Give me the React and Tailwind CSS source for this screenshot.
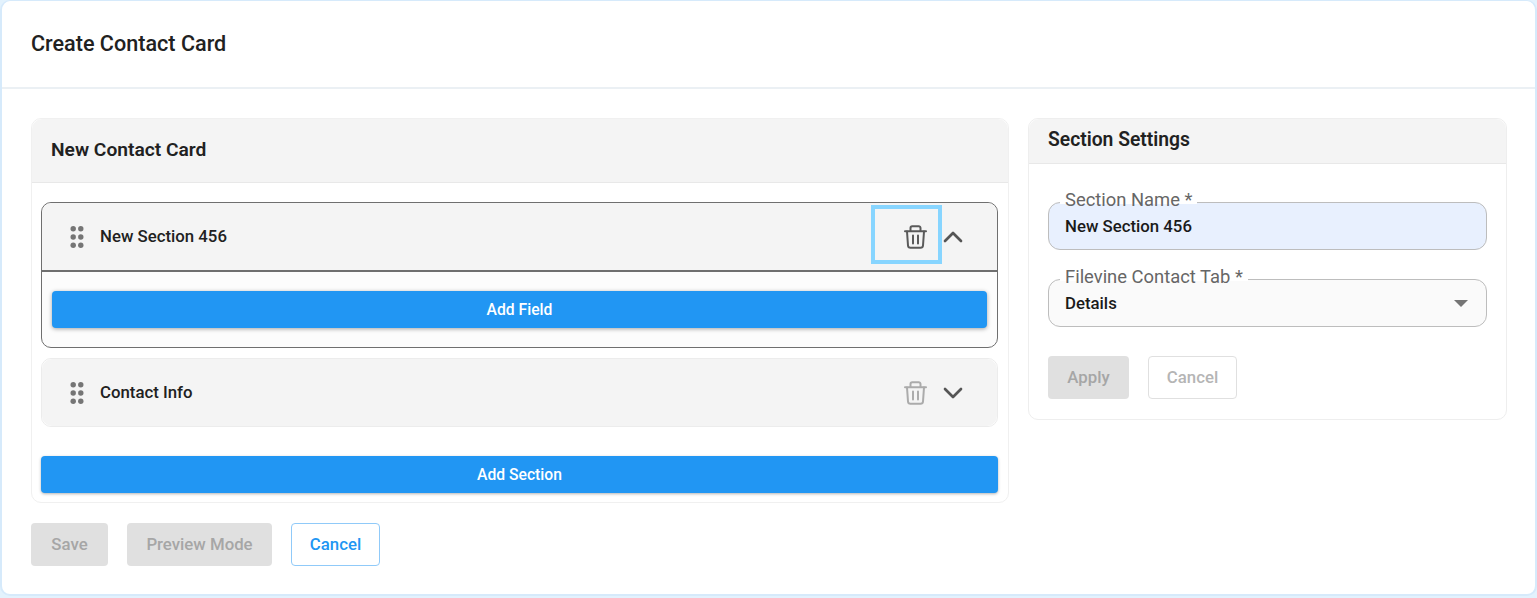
import React from "react";
import { ChevronUp, ChevronDown } from "lucide-react";

function GripDots() {
  return (
    <svg width="14" height="24" viewBox="0 0 14 24" className="shrink-0 text-[#757575]">
      {[3.7, 12, 20.3].map((y) => (
        <g key={y} fill="currentColor">
          <circle cx="3.2" cy={y} r="2.7" />
          <circle cx="10.8" cy={y} r="2.7" />
        </g>
      ))}
    </svg>
  );
}

function TrashIcon({ className }) {
  return (
    <svg
      width="25"
      height="24"
      viewBox="0 0 25 24"
      fill="none"
      stroke="currentColor"
      strokeWidth="2"
      strokeLinecap="round"
      strokeLinejoin="round"
      className={`shrink-0 ${className}`}
    >
      <path d="M2 6.2h21" />
      <path d="M7.5 6V3a1.8 1.8 0 0 1 1.8-1.8h6.4A1.8 1.8 0 0 1 17.5 3v3" />
      <path d="M4 6.5l1 14a2.5 2.5 0 0 0 2.5 2.3h10a2.5 2.5 0 0 0 2.5-2.3l1-14" />
      <path d="M10 10.5v8M15 10.5v8" />
    </svg>
  );
}

function SectionHeader({ title, open }) {
  return (
    <div
      className={`flex items-center rounded-t-[10px] bg-[#f4f4f4] pl-[28px] pr-[32px] ${
        open ? "h-[69px] border-b-2 border-[#6f6f6f]" : "h-[67px] rounded-b-[10px]"
      }`}
    >
      <GripDots />
      <span className="ml-[16px] flex-1 text-[16.8px] font-medium text-[#212121]">{title}</span>
      <div className="relative flex h-[24px] w-[24px] items-center justify-center">
        <TrashIcon className={open ? "text-[#5a5a5a]" : "text-[#ababab]"} />
        {open && (
          <div className="absolute left-[-32px] top-[-20px] h-[59px] w-[71px] border-[4px] border-[#87d5ff]" />
        )}
      </div>
      <div className="ml-[14px] flex w-[24px] items-center justify-center text-[#555555]">
        {open ? (
          <ChevronUp size={32} strokeWidth={2} className="shrink-0" />
        ) : (
          <ChevronDown size={32} strokeWidth={2} className="shrink-0" />
        )}
      </div>
    </div>
  );
}

function OutlinedField({ label, value, filled, select }) {
  return (
    <div
      className={`relative flex h-[48px] items-center rounded-[12px] border border-[#bdbdbd] px-[16px] text-[16.8px] font-medium text-[#1a1a1a] ${
        filled ? "bg-[#e8f0fe]" : "bg-[#fafafa]"
      }`}
    >
      <span className="absolute left-[11px] top-[-14px] px-[5px] text-[18.4px] leading-[22px] font-normal text-[#666666] [background:linear-gradient(to_bottom,white_68%,transparent_68%)]">
        {label}
      </span>
      <span className="flex-1 pt-[1px]">{value}</span>
      {select && (
        <svg width="14" height="7" viewBox="0 0 14 7" className="mr-[2px] text-[#757575]">
          <path d="M0 0h14L7 7z" fill="currentColor" />
        </svg>
      )}
    </div>
  );
}

export default function App() {
  return (
    <div className="h-[598px] w-full bg-[#e3f2fd] font-['Roboto','Liberation_Sans',sans-serif]">
      <div className="h-[596px] rounded-[10px] border-x-2 border-t border-b-2 border-[#d6eafb] bg-white">
        <div className="flex h-[88px] items-center border-b-2 border-[#ebf0f4] pl-[29px]">
          <h1 className="text-[21.6px] font-medium text-[#212121]">Create Contact Card</h1>
        </div>

        <div className="flex gap-[19px] pl-[29px] pr-[28px] pt-[29px]">
          {/* left column */}
          <div className="w-[978px]">
            <div className="h-[385px] rounded-[10px] border border-[#f0f0f0]">
              <div className="flex h-[64px] items-center rounded-t-[10px] border-b border-[#e8e8e8] bg-[#f4f4f4] pl-[19px] text-[19.2px] font-semibold text-[#212121]">
                New Contact Card
              </div>
              <div className="pl-[9px] pr-[10px] pt-[19px]">
                <div className="h-[146px] rounded-[10px] border border-[#6f6f6f] bg-[#fcfcfc]">
                  <SectionHeader title="New Section 456" open />
                  <div className="px-[10px] pt-[19px]">
                    <button className="h-[37px] w-full rounded-[4px] bg-[#2196f3] text-[15.7px] font-medium text-white shadow-[0_1px_4px_rgba(0,0,0,0.35)]">
                      Add Field
                    </button>
                  </div>
                </div>
                <div className="mt-[10px] h-[69px] rounded-[10px] border border-[#ececec]">
                  <SectionHeader title="Contact Info" />
                </div>
                <button className="mt-[29px] h-[37px] w-full rounded-[4px] bg-[#2196f3] text-[15.7px] font-medium text-white shadow-[0_1px_3px_rgba(0,0,0,0.3)]">
                  Add Section
                </button>
              </div>
            </div>

            <div className="mt-[20px] flex gap-[19px]">
              <button className="h-[43px] w-[77px] rounded-[4px] bg-[#e0e0e0] text-[16.8px] font-medium text-[#a6a6a6]">
                Save
              </button>
              <button className="h-[43px] w-[145px] rounded-[4px] bg-[#e0e0e0] text-[16.8px] font-medium text-[#a6a6a6]">
                Preview Mode
              </button>
              <button className="h-[43px] w-[89px] rounded-[4px] border border-[#90caf9] bg-white text-[16.8px] font-medium text-[#2196f3]">
                Cancel
              </button>
            </div>
          </div>

          {/* right column */}
          <div className="h-[302px] w-[479px] rounded-[10px] border border-[#eeeeee]">
            <div className="flex h-[45px] items-center rounded-t-[10px] border-b border-[#e8e8e8] bg-[#f4f4f4] pb-[1px] pl-[19px] text-[19.3px] font-semibold text-[#212121]">
              Section Settings
            </div>
            <div className="px-[19px] pt-[38px]">
              <OutlinedField label="Section Name *" value="New Section 456" filled />
              <div className="mt-[29px]">
                <OutlinedField label="Filevine Contact Tab *" value="Details" select />
              </div>
              <div className="mt-[29px] flex gap-[19px]">
                <button className="h-[43px] w-[81px] rounded-[4px] bg-[#e0e0e0] text-[16.8px] font-medium text-[#a6a6a6]">
                  Apply
                </button>
                <button className="h-[43px] w-[89px] rounded-[4px] border border-[#e0e0e0] bg-white text-[16.8px] font-medium text-[#b5b5b5]">
                  Cancel
                </button>
              </div>
            </div>
          </div>
        </div>
      </div>
    </div>
  );
}
